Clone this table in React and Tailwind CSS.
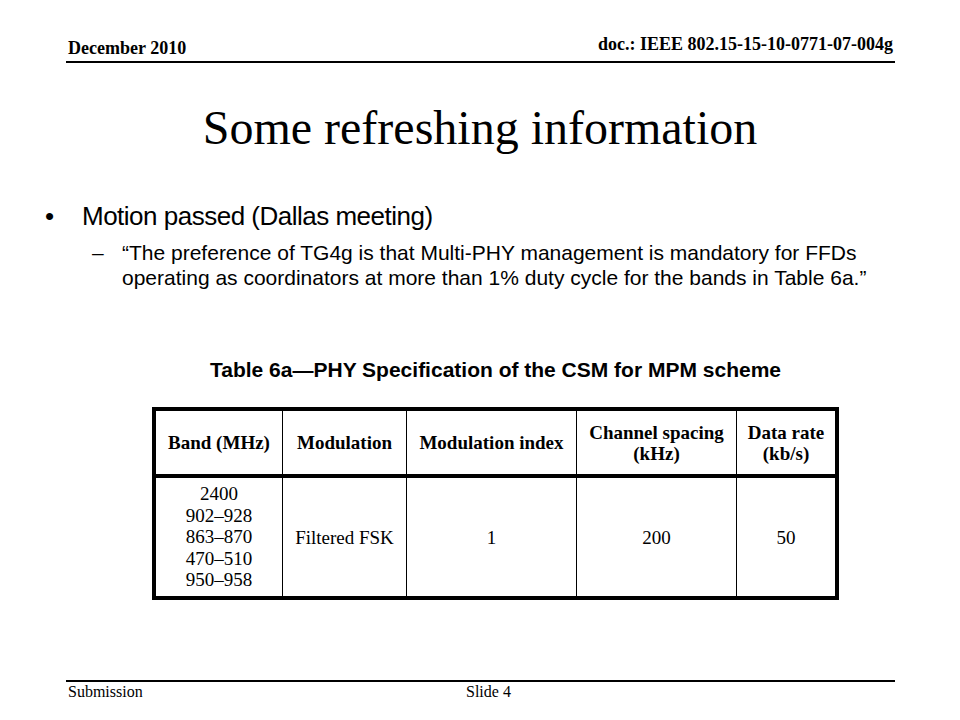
const serif = "font-['Liberation_Serif','Times_New_Roman',serif]";
const sans = "font-['Liberation_Sans',Arial,sans-serif]";

const HEAD = [
  ['Band (MHz)'],
  ['Modulation'],
  ['Modulation index'],
  ['Channel spacing', '(kHz)'],
  ['Data rate', '(kb/s)'],
];

const BODY = [
  ['2400', '902–928', '863–870', '470–510', '950–958'],
  ['Filtered FSK'],
  ['1'],
  ['200'],
  ['50'],
];

function Cell({ lines, bold, tall }) {
  return (
    <div className={`bg-white flex flex-col items-center justify-center text-center text-[19px] ${tall ? 'leading-[21.5px]' : 'leading-[21px]'} ${bold ? 'font-bold' : ''}`}>
      {lines.map((l, i) => (
        <span key={i}>{l}</span>
      ))}
    </div>
  );
}

export default function App() {
  return (
    <div className="w-[960px] h-[720px] bg-white text-black flex flex-col overflow-hidden">
      {/* Header */}
      <header className={`ml-[66px] w-[829px] h-[63px] border-b-2 border-black flex items-end justify-between pb-[4px] ${serif} font-bold text-[18px] leading-[18px]`}>
        <span className="pl-[2px]">December 2010</span>
        <span className="mb-[4px] pr-[2px]">doc.: IEEE 802.15-15-10-0771-07-004g</span>
      </header>

      <h1 className={`mt-[41px] text-center text-[48px] leading-[48px] ${serif}`}>
        Some refreshing information
      </h1>

      {/* Bullets */}
      <div className={sans}>
        <div className="mt-[51px] pl-[45px] flex text-[26px] leading-[26px] tracking-[-0.5px]">
          <span className="w-[37px] shrink-0">•</span>
          <span>Motion passed (Dallas meeting)</span>
        </div>
        <div className="mt-[11px] pl-[92px] flex text-[21px] leading-[25px]">
          <span className="w-[30px] shrink-0">–</span>
          <p>
            “The preference of TG4g is that Multi-PHY management is mandatory for FFDs
            <br />
            operating as coordinators at more than 1% duty cycle for the bands in Table 6a.”
          </p>
        </div>
      </div>

      {/* Table */}
      <div className="mt-[69px] ml-[152px] w-[687px]">
        <p className={`text-center font-bold text-[21px] leading-[21px] ${sans}`}>
          Table 6a—PHY Specification of the CSM for MPM scheme
        </p>
        <div className={`mt-[27px] grid grid-cols-[126px_123px_169px_159px_98px] grid-rows-[63px_118px] gap-x-px gap-y-[4px] bg-black p-[4px] ${serif}`}>
          {HEAD.map((h, i) => (
            <Cell key={'h' + i} lines={h} bold />
          ))}
          {BODY.map((b, i) => (
            <Cell key={'b' + i} lines={b} tall={b.length > 1} />
          ))}
        </div>
      </div>

      {/* Footer */}
      <footer className={`mt-auto ml-[66px] w-[829px] h-[40px] border-t-2 border-black pt-[2px] flex text-[16px] leading-[16px] ${serif}`}>
        <span className="w-[400px] pl-[2px] shrink-0">Submission</span>
        <span>Slide 4</span>
      </footer>
    </div>
  );
}
